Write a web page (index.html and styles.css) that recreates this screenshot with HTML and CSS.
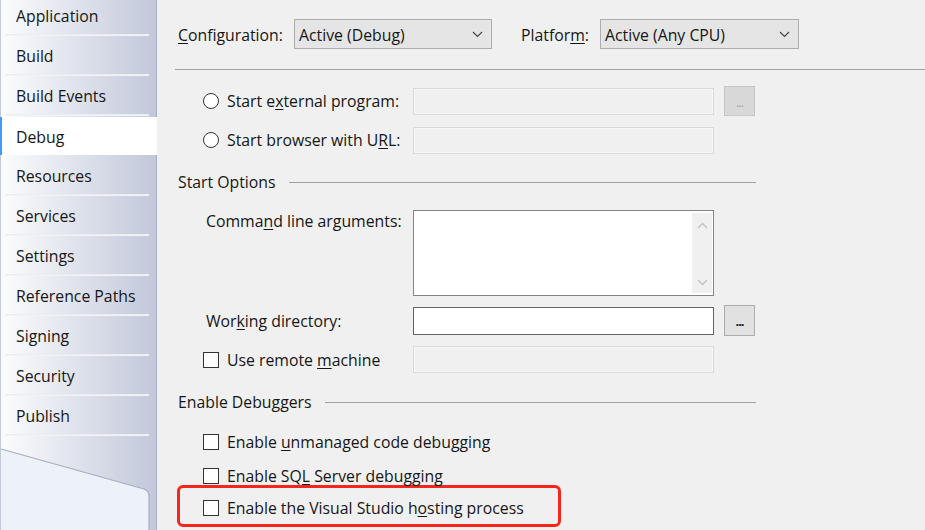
FILE: index.html
```html
<!DOCTYPE html>
<html lang="en">

<head>
    <meta charset="UTF-8">
    <title>Project Properties - Debug</title>
    <link rel="stylesheet" href="styles.css">
</head>

<body>
    <div class="window">
        <!-- Tabs links -->
        <nav class="tabs">
            <div class="tab">Application</div>
            <div class="tab">Build</div>
            <div class="tab">Build Events</div>
            <div class="tab selected">Debug</div>
            <div class="tab">Resources</div>
            <div class="tab">Services</div>
            <div class="tab">Settings</div>
            <div class="tab">Reference Paths</div>
            <div class="tab">Signing</div>
            <div class="tab">Security</div>
            <div class="tab">Publish</div>
            <svg class="tab-end" width="156" height="98" viewBox="0 0 156 98">
                <path d="M1 13 L144 53 Q149 55 149 60 L149 98 L1 98 Z" fill="#edf2f9" />
                <path d="M1 13 L144 53 Q149 55 149 60 L149 98" fill="none" stroke="#a6aec3" stroke-width="1.2" />
            </svg>
        </nav>

        <!-- Debug pagina -->
        <main class="page">
            <div class="config-row">
                <span class="label-config"><u>C</u>onfiguration:</span>
                <div class="select select-config"><span>Active (Debug)</span>
                    <svg class="chevron" width="11" height="7" viewBox="0 0 11 7"><path d="M1 1 L5.5 5.5 L10 1" fill="none" stroke="#444" stroke-width="1.1" /></svg>
                </div>
                <span class="label-platform">Platfor<u>m</u>:</span>
                <div class="select select-platform"><span>Active (Any CPU)</span>
                    <svg class="chevron" width="11" height="7" viewBox="0 0 11 7"><path d="M1 1 L5.5 5.5 L10 1" fill="none" stroke="#444" stroke-width="1.1" /></svg>
                </div>
            </div>

            <div class="divider"></div>

            <div class="content">
                <div class="row row-first">
                    <div class="field-label"><span class="radio"></span><span>Start e<u>x</u>ternal program:</span></div>
                    <div class="input disabled"></div>
                    <div class="dots-btn disabled">...</div>
                </div>
                <div class="row row-next">
                    <div class="field-label"><span class="radio"></span><span>Start browser with U<u>R</u>L:</span></div>
                    <div class="input disabled"></div>
                </div>

                <div class="group-title title-start">Start Options</div>

                <div class="row-args">
                    <div class="field-label plain"><span>Comma<u>n</u>d line arguments:</span></div>
                    <div class="textarea">
                        <div class="scrollbar">
                            <svg width="11" height="7" viewBox="0 0 11 7"><path d="M1 6 L5.5 1.5 L10 6" fill="none" stroke="#c2c2c2" stroke-width="1.4" /></svg>
                            <svg width="11" height="7" viewBox="0 0 11 7"><path d="M1 1 L5.5 5.5 L10 1" fill="none" stroke="#c2c2c2" stroke-width="1.4" /></svg>
                        </div>
                    </div>
                </div>
                <div class="row row-work">
                    <div class="field-label plain"><span>Wor<u>k</u>ing directory:</span></div>
                    <div class="input active"></div>
                    <div class="dots-btn">...</div>
                </div>
                <div class="row row-remote">
                    <div class="field-label"><span class="check"></span><span>Use remote <u>m</u>achine</span></div>
                    <div class="input disabled"></div>
                </div>

                <div class="group-title title-debuggers">Enable Debuggers</div>

                <div class="check-row first-check"><span class="check"></span><span>Enable <u>u</u>nmanaged code debugging</span></div>
                <div class="check-row second-check"><span class="check"></span><span>Enable SQ<u>L</u> Server debugging</span></div>
                <div class="highlight">
                    <div class="check-row"><span class="check"></span><span>Enable the Visual Studio h<u>o</u>sting process</span></div>
                </div>
            </div>
        </main>
    </div>
</body>

</html>
```

FILE: styles.css
```css
body {
    margin: 0;
    font-family: "Open Sans", "Noto Sans", sans-serif;
    font-size: 15.8px;
    color: #161616;
    background-color: #f0f0f0;
    overflow: hidden;
}

u {
    text-decoration-thickness: 1px;
    text-underline-offset: 2px;
}

.window {
    display: flex;
    width: 925px;
    height: 530px;
    overflow: hidden;
}

/* Tabs links */
.tabs {
    width: 155px;
    flex: none;
    display: flex;
    flex-direction: column;
    margin-top: -4px;
    background: linear-gradient(to right, #fbfcfd, #c2c8da);
    border-left: 1px solid #c3cad9;
    border-right: 1px solid #aab1c4;
}

.tab {
    height: 37px;
    padding-top: 1px;
    line-height: 38px;
    padding-left: 15px;
    position: relative;
    flex: none;
    border-bottom: 2px solid transparent;
}

.tab::after {
    content: "";
    position: absolute;
    left: 5px;
    right: 7px;
    bottom: -2px;
    height: 2px;
    background: linear-gradient(to bottom, #e6e9f1, #f6f7fa);
}

.tab.selected {
    background-color: #ffffff;
    margin: 1px -1px 1px -1px;
    height: 37px;
    line-height: 38px;
    border-bottom: none;
    border-left: 2px solid #3c9cf5;
    padding-left: 14px;
}

.tab.selected::after {
    display: none;
}

.tab-end {
    display: block;
    flex: none;
    margin-left: -1px;
}

/* Rechterpagina */
.page {
    flex: 1;
    padding-top: 19px;
}

.config-row {
    display: flex;
    align-items: center;
    height: 30px;
    padding-left: 21px;
}

.label-config {
    width: 116px;
    padding-top: 2px;
}

.label-platform {
    width: 79px;
    margin-left: 29px;
    padding-top: 2px;
}

.select {
    box-sizing: border-box;
    height: 30px;
    border: 1px solid #adadad;
    background-color: #e5e5e5;
    padding-left: 4px;
    display: flex;
    align-items: center;
    justify-content: space-between;
    padding-right: 8px;
}

.select span {
    padding-top: 1px;
}

.select-config {
    width: 198px;
}

.select-platform {
    width: 199px;
}

.divider {
    margin: 20px 0 0 18px;
    border-top: 1px solid #a0a0a0;
}

.content {
    padding-left: 21px;
    width: 578px;
}

.row {
    display: flex;
    align-items: center;
    height: 30px;
}

.row-first {
    margin-top: 16px;
}

.row-next {
    margin-top: 9px;
}

.row-work {
    margin-top: 9px;
    height: 31px;
}

.row-remote {
    margin-top: 9px;
    height: 29px;
}

.field-label {
    width: 235px;
    flex: none;
    padding-left: 25px;
    box-sizing: border-box;
    display: flex;
    align-items: center;
    white-space: nowrap;
}

.field-label.plain {
    padding-left: 28px;
}

.radio {
    width: 14px;
    height: 14px;
    border: 1px solid #333333;
    border-radius: 50%;
    background-color: #ffffff;
    margin-right: 8px;
    flex: none;
}

.check {
    width: 14px;
    height: 14px;
    border: 1px solid #333333;
    background-color: #ffffff;
    margin-right: 8px;
    flex: none;
}

.input {
    box-sizing: border-box;
    width: 301px;
    height: 27px;
}

.input.disabled {
    border: 1px solid #d9d9d9;
    background-color: #f0f0f0;
    box-shadow: inset 0 0 0 1px #f7f7f7;
}

.input.active {
    height: 28px;
    border: 1px solid #646464;
    background-color: #ffffff;
}

.dots-btn {
    box-sizing: border-box;
    width: 31px;
    height: 31px;
    margin-left: 10px;
    border: 1px solid #adadad;
    background-color: #e1e1e1;
    text-align: center;
    line-height: 30px;
    font-size: 13px;
    font-weight: bold;
    letter-spacing: -1px;
}

.dots-btn.disabled {
    height: 30px;
    background-color: #d8d8d8;
    border-color: #c6c6c6;
    color: #a9a9a9;
    font-weight: normal;
}

.group-title {
    display: flex;
    align-items: center;
    height: 20px;
}

.group-title::after {
    content: "";
    flex: 1;
    border-top: 1px solid #a0a0a0;
    margin-left: 13px;
}

.title-start {
    margin-top: 17px;
}

.title-debuggers {
    margin-top: 18px;
}

.row-args {
    display: flex;
    margin-top: 18px;
}

.row-args .field-label {
    align-items: flex-start;
    padding-top: 0;
}

.textarea {
    box-sizing: border-box;
    width: 301px;
    height: 86px;
    border: 1px solid #858585;
    background-color: #ffffff;
    display: flex;
    justify-content: flex-end;
    padding: 2px 1px;
}

.scrollbar {
    width: 20px;
    background-color: #f0f0f0;
    display: flex;
    flex-direction: column;
    align-items: center;
    justify-content: space-between;
    padding: 9px 0 7px;
}

.scrollbar svg {
    display: block;
}

.check-row {
    display: flex;
    align-items: center;
    height: 20px;
    padding-left: 25px;
    white-space: nowrap;
}

.first-check {
    margin-top: 20px;
}

.second-check {
    margin-top: 14px;
}

/* Rode markering */
.highlight {
    width: 384px;
    height: 42px;
    box-sizing: border-box;
    margin: -1px 0 0 -1px;
    border: 3px solid #f5261d;
    border-radius: 6px;
    padding-top: 10px;
}

.highlight .check-row {
    padding-left: 23px;
}
```
